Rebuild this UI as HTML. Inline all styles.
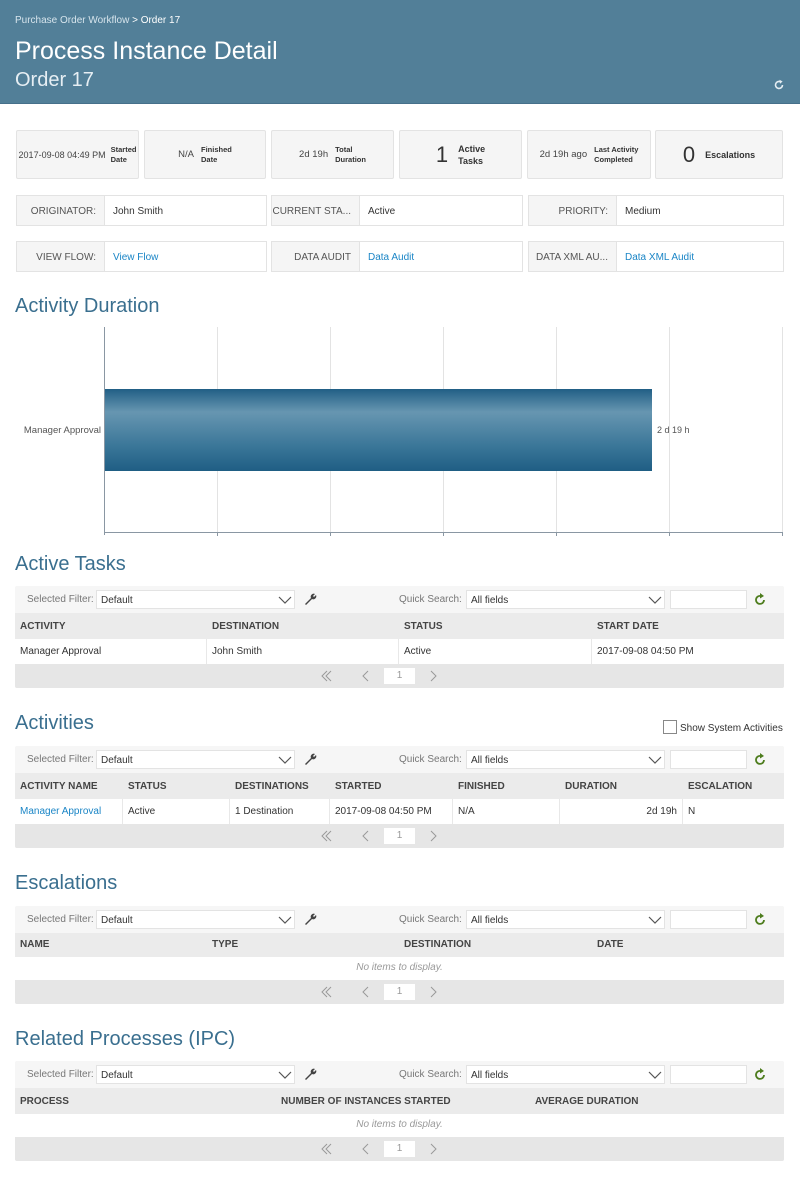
<!DOCTYPE html>
<html><head><meta charset="utf-8">
<style>
*{box-sizing:border-box;margin:0;padding:0}
body{width:800px;height:1190px;background:#fff;font-family:"Liberation Sans",sans-serif;color:#333;position:relative;overflow:hidden;font-size:10px}
.abs{position:absolute}
.hdr{left:0;top:0;width:800px;height:104px;background:#527f98;border-bottom:1px solid #46708a}
.stat{position:absolute;top:130px;height:49px;background:#f5f5f5;border:1px solid #e3e3e3;border-radius:2px;display:flex;align-items:center;justify-content:center;gap:7px;white-space:nowrap}
.stat .v{font-size:9.5px;color:#444}
.stat .big{font-size:22px;color:#333}
.stat .l{font-size:7.5px;font-weight:bold;color:#333;line-height:10px}
.info{position:absolute;height:31px;border:1px solid #e3e3e3;display:flex;background:#fff}
.info .k{width:88px;background:#f5f5f5;border-right:1px solid #e3e3e3;text-align:right;padding-right:8px;line-height:31px;color:#555;font-size:10px;white-space:nowrap;overflow:hidden}
.info .val{padding-left:8px;line-height:31px;font-size:10px}
.lnk{color:#1a85c6}
h2{position:absolute;left:15px;font-weight:normal;font-size:20px;color:#3a6f8f;white-space:nowrap}
.grid{position:absolute;left:15px;width:769px;background:#f6f6f6;border-radius:2px;overflow:hidden}
.tb{height:27px;position:relative}
.tb .lab{position:absolute;top:8px;color:#777;font-size:10px}
.sel{position:absolute;top:4px;height:19px;background:#fff;border:1px solid #e3e3e3;padding-left:4px;line-height:19px;font-size:10px;color:#333}
.sel svg{position:absolute;right:2px;top:4px}
.inp{position:absolute;top:4px;left:655px;width:77px;height:19px;background:#fff;border:1px solid #e3e3e3}
.th{height:26px;background:#ebebeb;display:flex}
.th div,.tr div{padding-left:5px;line-height:27px;font-size:10px;white-space:nowrap}
.th div{font-weight:bold;color:#444}
.tr{height:25px;background:#fff;display:flex}
.tr div{line-height:25px;border-right:1px solid #e8e8e8}
.tr div:last-child{border-right:none}
.empty{height:23px;background:#fff;text-align:center;line-height:22px;font-style:italic;color:#999;font-size:10px}
.pg{height:24px;background:#e6e6e6;position:relative}
.pg .n{position:absolute;left:369px;top:4px;width:31px;height:16px;background:#fff;text-align:center;line-height:16px;color:#999;font-size:10px}
.pg svg{position:absolute;left:0;top:0}
</style></head><body>
<div class="abs hdr"></div>
<div class="abs" style="left:15px;top:15px;font-size:10px;color:#d6e4ec">Purchase Order Workflow <span style="color:#fff">&gt; Order 17</span></div>
<div class="abs" style="left:15px;top:37px;font-size:25px;color:#fff">Process Instance Detail</div>
<div class="abs" style="left:15px;top:69px;font-size:20px;color:#e6eef3">Order 17</div>
<svg class="abs" style="left:773px;top:79px" width="12" height="12" viewBox="0 0 12 12"><path d="M9.5 6A3.5 3.5 0 1 1 7.5 2.8" fill="none" stroke="#e6eef3" stroke-width="1.6"/><path d="M6.5 0.8L9.6 2.5L7 4.8Z" fill="#e6eef3"/></svg>

<div class="stat" style="left:16px;width:123px;gap:5px"><span class="v" style="font-size:9px">2017-09-08 04:49 PM</span><span class="l">Started<br>Date</span></div>
<div class="stat" style="left:144px;width:122px"><span class="v">N/A</span><span class="l">Finished<br>Date</span></div>
<div class="stat" style="left:271px;width:123px"><span class="v">2d 19h</span><span class="l">Total<br>Duration</span></div>
<div class="stat" style="left:399px;width:123px;gap:10px"><span class="big">1</span><span class="l" style="font-size:9px;line-height:12px">Active<br>Tasks</span></div>
<div class="stat" style="left:527px;width:124px"><span class="v">2d 19h ago</span><span class="l">Last Activity<br>Completed</span></div>
<div class="stat" style="left:655px;width:128px;gap:10px"><span class="big">0</span><span class="l" style="font-size:9px">Escalations</span></div>

<div class="info" style="left:16px;top:195px;width:251px"><div class="k">ORIGINATOR:</div><div class="val">John Smith</div></div>
<div class="info" style="left:271px;top:195px;width:252px"><div class="k">CURRENT STA...</div><div class="val">Active</div></div>
<div class="info" style="left:528px;top:195px;width:256px"><div class="k">PRIORITY:</div><div class="val">Medium</div></div>
<div class="info" style="left:16px;top:241px;width:251px"><div class="k">VIEW FLOW:</div><div class="val lnk">View Flow</div></div>
<div class="info" style="left:271px;top:241px;width:252px"><div class="k">DATA AUDIT</div><div class="val lnk">Data Audit</div></div>
<div class="info" style="left:528px;top:241px;width:256px"><div class="k">DATA XML AU...</div><div class="val lnk">Data XML Audit</div></div>

<h2 style="top:295px">Activity Duration</h2>
<svg class="abs" style="left:0;top:320px" width="800" height="220">
<defs><linearGradient id="g" x1="0" y1="0" x2="0" y2="1"><stop offset="0" stop-color="#215f85"/><stop offset=".28" stop-color="#6796b1"/><stop offset=".7" stop-color="#3a7698"/><stop offset="1" stop-color="#1f5e84"/></linearGradient></defs>
<g stroke="#e3e3e3" stroke-width="1"><line x1="217.5" y1="7" x2="217.5" y2="212"/><line x1="330.5" y1="7" x2="330.5" y2="212"/><line x1="443.5" y1="7" x2="443.5" y2="212"/><line x1="556.5" y1="7" x2="556.5" y2="212"/><line x1="669.5" y1="7" x2="669.5" y2="212"/><line x1="782.5" y1="7" x2="782.5" y2="212"/></g>
<line x1="104.5" y1="7" x2="104.5" y2="215" stroke="#8a97a3"/>
<line x1="104" y1="212.5" x2="783" y2="212.5" stroke="#8a97a3"/>
<g stroke="#8a97a3"><line x1="217.5" y1="212" x2="217.5" y2="216"/><line x1="330.5" y1="212" x2="330.5" y2="216"/><line x1="443.5" y1="212" x2="443.5" y2="216"/><line x1="556.5" y1="212" x2="556.5" y2="216"/><line x1="669.5" y1="212" x2="669.5" y2="216"/><line x1="782.5" y1="212" x2="782.5" y2="216"/></g>
<rect x="105" y="69" width="547" height="82" fill="url(#g)"/>
<text x="101" y="113" text-anchor="end" font-size="9.5" fill="#555" font-family="Liberation Sans">Manager Approval</text>
<text x="657" y="113" font-size="9" fill="#555" font-family="Liberation Sans">2 d 19 h</text>
</svg>

<h2 style="top:553px">Active Tasks</h2>
<div class="grid" style="top:586px">
 <div class="tb"><span class="lab" style="left:12px">Selected Filter:</span><div class="sel" style="left:81px;width:199px">Default<svg width="14" height="10"><path d="M1 2L7 8L13 2" fill="none" stroke="#555" stroke-width="1.2"/></svg></div>
 <svg class="abs" style="left:288px;top:6px" width="14" height="14" viewBox="0 0 14 14"><path d="M2 12L8 6A3 3 0 0 1 12 2L10 4L11 5L13 3A3 3 0 0 1 9 7L3 13Z" fill="#444"/></svg>
 <span class="lab" style="left:384px">Quick Search:</span><div class="sel" style="left:451px;width:199px">All fields<svg width="14" height="10"><path d="M1 2L7 8L13 2" fill="none" stroke="#555" stroke-width="1.2"/></svg></div><div class="inp"></div>
 <svg class="abs" style="left:739px;top:7px" width="12" height="13" viewBox="0 0 12 13"><path d="M10 7A4 4 0 1 1 7 3" fill="none" stroke="#4e7d1e" stroke-width="1.8"/><path d="M6 0L10 3L6 5.5Z" fill="#4e7d1e"/></svg></div>
 <div class="th"><div style="width:192px">ACTIVITY</div><div style="width:192px">DESTINATION</div><div style="width:193px">STATUS</div><div style="width:192px">START DATE</div></div>
 <div class="tr"><div style="width:192px">Manager Approval</div><div style="width:192px">John Smith</div><div style="width:193px">Active</div><div style="width:192px">2017-09-08 04:50 PM</div></div>
 <div class="pg"><svg width="769" height="24"><g fill="none" stroke="#999" stroke-width="1"><path d="M312 7L307 12L312 17M316 7L311 12L316 17M353 7L348 12L353 17M416 7L421 12L416 17"/></g></svg><div class="n">1</div></div>
</div>

<h2 style="top:712px">Activities</h2>
<div class="abs" style="left:663px;top:720px;width:14px;height:14px;border:1px solid #888;background:#fff"></div>
<div class="abs" style="left:680px;top:723px;font-size:10px;color:#333">Show System Activities</div>
<div class="grid" style="top:746px">
 <div class="tb"><span class="lab" style="left:12px">Selected Filter:</span><div class="sel" style="left:81px;width:199px">Default<svg width="14" height="10"><path d="M1 2L7 8L13 2" fill="none" stroke="#555" stroke-width="1.2"/></svg></div>
 <svg class="abs" style="left:288px;top:6px" width="14" height="14" viewBox="0 0 14 14"><path d="M2 12L8 6A3 3 0 0 1 12 2L10 4L11 5L13 3A3 3 0 0 1 9 7L3 13Z" fill="#444"/></svg>
 <span class="lab" style="left:384px">Quick Search:</span><div class="sel" style="left:451px;width:199px">All fields<svg width="14" height="10"><path d="M1 2L7 8L13 2" fill="none" stroke="#555" stroke-width="1.2"/></svg></div><div class="inp"></div>
 <svg class="abs" style="left:739px;top:7px" width="12" height="13" viewBox="0 0 12 13"><path d="M10 7A4 4 0 1 1 7 3" fill="none" stroke="#4e7d1e" stroke-width="1.8"/><path d="M6 0L10 3L6 5.5Z" fill="#4e7d1e"/></svg></div>
 <div class="th"><div style="width:108px">ACTIVITY NAME</div><div style="width:107px">STATUS</div><div style="width:100px">DESTINATIONS</div><div style="width:123px">STARTED</div><div style="width:107px">FINISHED</div><div style="width:123px">DURATION</div><div style="width:101px">ESCALATION</div></div>
 <div class="tr"><div style="width:108px" class="lnk">Manager Approval</div><div style="width:107px">Active</div><div style="width:100px">1 Destination</div><div style="width:123px">2017-09-08 04:50 PM</div><div style="width:107px">N/A</div><div style="width:123px;text-align:right;padding-right:5px">2d 19h</div><div style="width:101px">N</div></div>
 <div class="pg"><svg width="769" height="24"><g fill="none" stroke="#999" stroke-width="1"><path d="M312 7L307 12L312 17M316 7L311 12L316 17M353 7L348 12L353 17M416 7L421 12L416 17"/></g></svg><div class="n">1</div></div>
</div>

<h2 style="top:872px">Escalations</h2>
<div class="grid" style="top:906px">
 <div class="tb"><span class="lab" style="left:12px">Selected Filter:</span><div class="sel" style="left:81px;width:199px">Default<svg width="14" height="10"><path d="M1 2L7 8L13 2" fill="none" stroke="#555" stroke-width="1.2"/></svg></div>
 <svg class="abs" style="left:288px;top:6px" width="14" height="14" viewBox="0 0 14 14"><path d="M2 12L8 6A3 3 0 0 1 12 2L10 4L11 5L13 3A3 3 0 0 1 9 7L3 13Z" fill="#444"/></svg>
 <span class="lab" style="left:384px">Quick Search:</span><div class="sel" style="left:451px;width:199px">All fields<svg width="14" height="10"><path d="M1 2L7 8L13 2" fill="none" stroke="#555" stroke-width="1.2"/></svg></div><div class="inp"></div>
 <svg class="abs" style="left:739px;top:7px" width="12" height="13" viewBox="0 0 12 13"><path d="M10 7A4 4 0 1 1 7 3" fill="none" stroke="#4e7d1e" stroke-width="1.8"/><path d="M6 0L10 3L6 5.5Z" fill="#4e7d1e"/></svg></div>
 <div class="th" style="height:24px"><div style="width:192px;line-height:24px">NAME</div><div style="width:192px;line-height:24px">TYPE</div><div style="width:193px;line-height:24px">DESTINATION</div><div style="width:192px;line-height:24px">DATE</div></div>
 <div class="empty">No items to display.</div>
 <div class="pg"><svg width="769" height="24"><g fill="none" stroke="#999" stroke-width="1"><path d="M312 7L307 12L312 17M316 7L311 12L316 17M353 7L348 12L353 17M416 7L421 12L416 17"/></g></svg><div class="n">1</div></div>
</div>

<h2 style="top:1028px">Related Processes (IPC)</h2>
<div class="grid" style="top:1061px">
 <div class="tb"><span class="lab" style="left:12px">Selected Filter:</span><div class="sel" style="left:81px;width:199px">Default<svg width="14" height="10"><path d="M1 2L7 8L13 2" fill="none" stroke="#555" stroke-width="1.2"/></svg></div>
 <svg class="abs" style="left:288px;top:6px" width="14" height="14" viewBox="0 0 14 14"><path d="M2 12L8 6A3 3 0 0 1 12 2L10 4L11 5L13 3A3 3 0 0 1 9 7L3 13Z" fill="#444"/></svg>
 <span class="lab" style="left:384px">Quick Search:</span><div class="sel" style="left:451px;width:199px">All fields<svg width="14" height="10"><path d="M1 2L7 8L13 2" fill="none" stroke="#555" stroke-width="1.2"/></svg></div><div class="inp"></div>
 <svg class="abs" style="left:739px;top:7px" width="12" height="13" viewBox="0 0 12 13"><path d="M10 7A4 4 0 1 1 7 3" fill="none" stroke="#4e7d1e" stroke-width="1.8"/><path d="M6 0L10 3L6 5.5Z" fill="#4e7d1e"/></svg></div>
 <div class="th"><div style="width:261px">PROCESS</div><div style="width:254px">NUMBER OF INSTANCES STARTED</div><div style="width:254px">AVERAGE DURATION</div></div>
 <div class="empty">No items to display.</div>
 <div class="pg"><svg width="769" height="24"><g fill="none" stroke="#999" stroke-width="1"><path d="M312 7L307 12L312 17M316 7L311 12L316 17M353 7L348 12L353 17M416 7L421 12L416 17"/></g></svg><div class="n">1</div></div>
</div>
</body></html>
